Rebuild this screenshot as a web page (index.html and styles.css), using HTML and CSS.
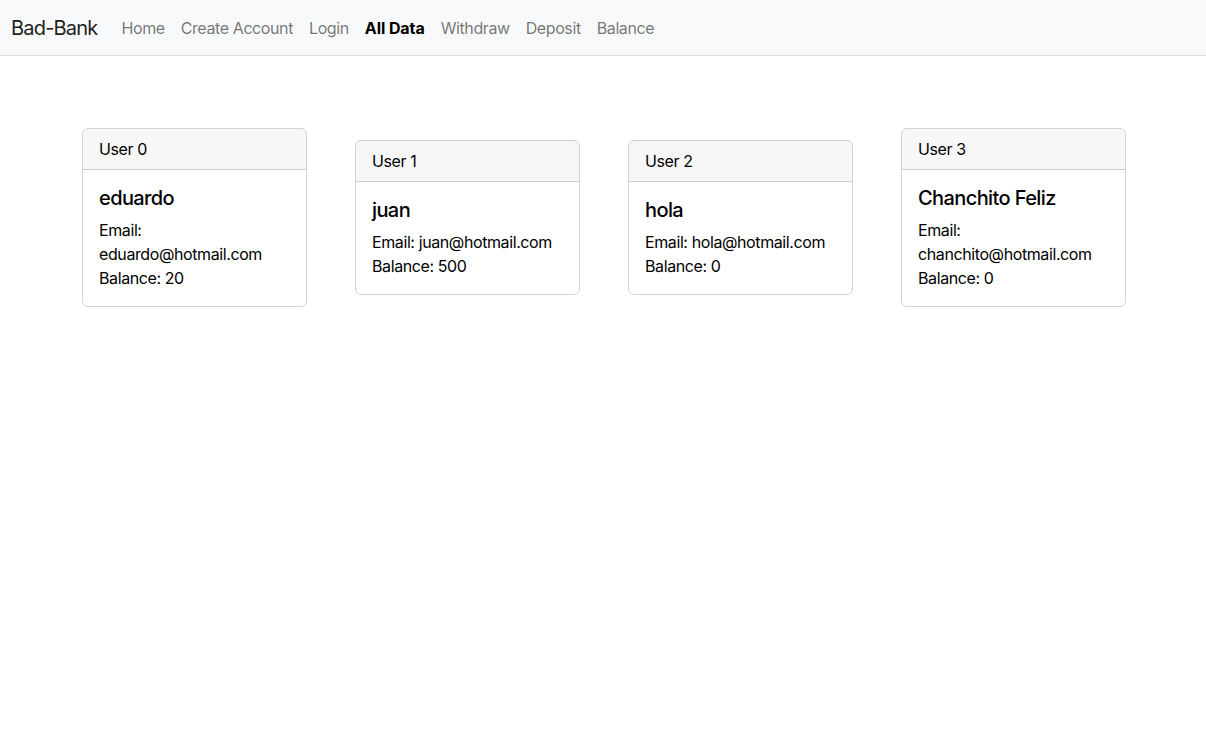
FILE: index.html
```html
<!DOCTYPE html>
<html lang="en">
<head>
<meta charset="utf-8">
<title>Bad-Bank</title>
<link rel="stylesheet" href="styles.css">
</head>
<body>
<nav class="navbar">
  <a class="brand" href="#">Bad-Bank</a>
  <ul class="nav">
    <li><a class="nav-link" href="#">Home</a></li>
    <li><a class="nav-link" href="#">Create Account</a></li>
    <li><a class="nav-link" href="#">Login</a></li>
    <li><a class="nav-link active" href="#">All Data</a></li>
    <li><a class="nav-link" href="#">Withdraw</a></li>
    <li><a class="nav-link" href="#">Deposit</a></li>
    <li><a class="nav-link" href="#">Balance</a></li>
  </ul>
</nav>
<main class="cards">
  <div class="card">
    <div class="card-header">User 0</div>
    <div class="card-body">
      <h5 class="card-title">eduardo</h5>
      <p class="card-text">Email: eduardo@hotmail.com</p>
      <p class="card-text">Balance: 20</p>
    </div>
  </div>
  <div class="card">
    <div class="card-header">User 1</div>
    <div class="card-body">
      <h5 class="card-title">juan</h5>
      <p class="card-text">Email: juan@hotmail.com</p>
      <p class="card-text">Balance: 500</p>
    </div>
  </div>
  <div class="card">
    <div class="card-header">User 2</div>
    <div class="card-body">
      <h5 class="card-title">hola</h5>
      <p class="card-text">Email: hola@hotmail.com</p>
      <p class="card-text">Balance: 0</p>
    </div>
  </div>
  <div class="card">
    <div class="card-header">User 3</div>
    <div class="card-body">
      <h5 class="card-title">Chanchito Feliz</h5>
      <p class="card-text">Email: chanchito@hotmail.com</p>
      <p class="card-text">Balance: 0</p>
    </div>
  </div>
</main>
</body>
</html>
```
FILE: styles.css
```css
* { box-sizing: border-box; }
body {
  margin: 0;
  font-family: Inter, "Noto Sans", "Liberation Sans", sans-serif;
  font-size: 16px;
  line-height: 1.5;
  letter-spacing: -0.025em;
  color: #212529;
  background: #fff;
}
.navbar {
  display: flex;
  align-items: center;
  height: 56px;
  padding: 0 12px 0 11px;
  background: #f8f9fa;
  border-bottom: 1px solid #dcdee0;
}
.brand {
  font-size: 20px;
  letter-spacing: -0.04em;
  color: rgba(0,0,0,.9);
  text-decoration: none;
  margin-right: 16px;
  line-height: 30px;
}
.nav {
  display: flex;
  list-style: none;
  margin: 0;
  padding: 0;
}
.nav-link {
  display: block;
  padding: 8px;
  color: rgba(0,0,0,.55);
  text-decoration: none;
}
.nav-link.active {
  color: #000;
  font-weight: 700;
  letter-spacing: -0.005em;
}
.cards {
  display: flex;
  justify-content: center;
  align-items: center;
  gap: 48px;
  margin-top: 72px;
  padding-left: 2px;
}
.card {
  width: 225px;
  border: 1px solid rgba(0,0,0,.175);
  border-radius: 6px;
  overflow: hidden;
  color: #000;
}
.card-header {
  padding: 8px 16px;
  background: rgba(0,0,0,.03);
  border-bottom: 1px solid rgba(0,0,0,.175);
}
.card-body {
  padding: 16px;
}
.card-title {
  margin: 0 0 8px;
  font-size: 20px;
  font-weight: 500;
  letter-spacing: -0.03em;
  line-height: 1.2;
}
.card-text {
  margin: 0;
}
```
